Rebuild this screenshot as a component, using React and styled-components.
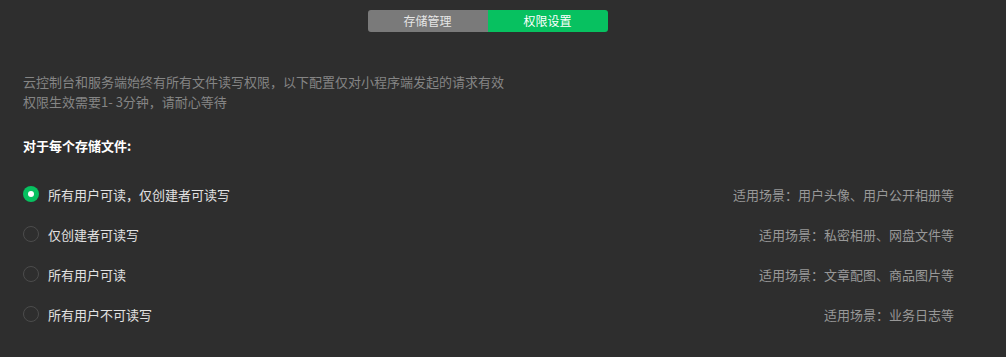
import React, { useState } from "react";
import styled, { createGlobalStyle } from "styled-components";

const GlobalStyle = createGlobalStyle`
  html, body {
    margin: 0;
    padding: 0;
    background: #2e2e2e;
  }
  body {
    font-family: "Noto Sans CJK SC", "Liberation Sans", sans-serif;
  }
`;

const Page = styled.div`
  width: 1006px;
  height: 357px;
  background: #2e2e2e;
  box-sizing: border-box;
  padding: 10px 52px 0 23px;
`;

const TabBar = styled.div`
  display: flex;
  justify-content: center;
  margin-left: -23px;
  margin-right: -52px;
`;

const Segmented = styled.div`
  display: flex;
  border-radius: 3px;
  overflow: hidden;
  margin-left: -31px;
`;

const Tab = styled.button`
  width: 120px;
  height: 22px;
  border: none;
  padding: 0;
  font-family: inherit;
  font-size: 12px;
  line-height: 22px;
  color: ${({ active }) => (active ? "#ffffff" : "#e6e6e6")};
  background: ${({ active }) => (active ? "#07c160" : "#7a7a7a")};
  cursor: pointer;
`;

const Notice = styled.div`
  margin-top: 40px;
  font-size: 13px;
  line-height: 20px;
  color: #858585;
`;

const Heading = styled.div`
  margin-top: 24px;
  font-size: 13px;
  line-height: 20px;
  font-weight: 700;
  color: #ffffff;
`;

const OptionList = styled.div`
  margin-top: 18px;
  display: flex;
  flex-direction: column;
`;

const Option = styled.label`
  display: flex;
  align-items: center;
  height: 40px;
  cursor: pointer;
`;

const Radio = styled.span`
  width: 16px;
  height: 16px;
  box-sizing: border-box;
  border-radius: 50%;
  flex: 0 0 16px;
  border: ${({ checked }) => (checked ? "none" : "1px solid #4c4c4c")};
  background: ${({ checked }) => (checked ? "#07c160" : "transparent")};
  display: flex;
  align-items: center;
  justify-content: center;

  &::after {
    content: "";
    display: ${({ checked }) => (checked ? "block" : "none")};
    width: 6px;
    height: 6px;
    border-radius: 50%;
    background: #ffffff;
  }
`;

const Label = styled.span`
  margin-left: 9px;
  font-size: 13px;
  color: #e2e2e2;
`;

const Scene = styled.span`
  margin-left: auto;
  font-size: 13px;
  color: #989898;
`;

const options = [
  { label: "所有用户可读，仅创建者可读写", scene: "适用场景：用户头像、用户公开相册等" },
  { label: "仅创建者可读写", scene: "适用场景：私密相册、网盘文件等" },
  { label: "所有用户可读", scene: "适用场景：文章配图、商品图片等" },
  { label: "所有用户不可读写", scene: "适用场景：业务日志等" },
];

export default function App() {
  const [tab, setTab] = useState(1);
  const [selected, setSelected] = useState(0);

  return (
    <Page>
      <GlobalStyle />
      <TabBar>
        <Segmented>
          <Tab active={tab === 0} onClick={() => setTab(0)}>存储管理</Tab>
          <Tab active={tab === 1} onClick={() => setTab(1)}>权限设置</Tab>
        </Segmented>
      </TabBar>
      <Notice>
        云控制台和服务端始终有所有文件读写权限，以下配置仅对小程序端发起的请求有效
        <br />
        权限生效需要1- 3分钟，请耐心等待
      </Notice>
      <Heading>对于每个存储文件:</Heading>
      <OptionList>
        {options.map((o, i) => (
          <Option key={o.label} onClick={() => setSelected(i)}>
            <Radio checked={selected === i} />
            <Label>{o.label}</Label>
            <Scene>{o.scene}</Scene>
          </Option>
        ))}
      </OptionList>
    </Page>
  );
}
